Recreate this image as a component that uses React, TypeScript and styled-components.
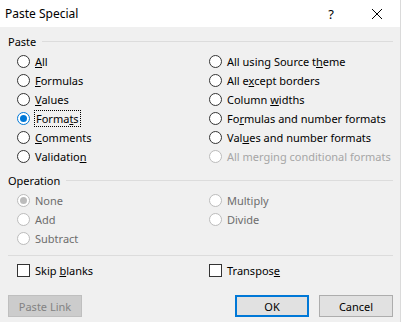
import React from 'react';
import styled, { createGlobalStyle } from 'styled-components';

const GlobalStyle = createGlobalStyle`
  html, body {
    margin: 0;
    padding: 0;
    background: #ffffff;
  }
  body {
    font-family: 'Noto Sans', 'Open Sans', sans-serif;
    font-size: 11px;
    color: #000000;
  }
`;

const Dialog = styled.div`
  width: 400px;
  height: 322px;
  background: #f0f0f0;
  border-right: 1px solid #dadada;
  display: flex;
  flex-direction: column;
`;

const TitleBar = styled.div`
  height: 27px;
  background: #ffffff;
  display: flex;
  align-items: center;
  padding-left: 5px;
`;

const Title = styled.div`
  flex: 1;
  font-size: 12px;
`;

const TitleButton = styled.div`
  width: 46px;
  height: 27px;
  display: flex;
  align-items: center;
  justify-content: center;
  font-size: 13px;
`;

const Body = styled.div`
  padding: 6px 7px 0 8px;
  display: flex;
  flex-direction: column;
`;

const GroupHeader = styled.div<{ $gap?: number }>`
  display: flex;
  align-items: center;
  height: 16px;
  gap: 6px;
  margin-top: ${p => p.$gap ?? 0}px;

  &::after {
    content: '';
    flex: 1;
    height: 1px;
    background: #dcdcdc;
  }
`;

const OptionGrid = styled.div<{ $rows: number }>`
  display: grid;
  grid-template-columns: 192px 1fr;
  grid-template-rows: repeat(${p => p.$rows}, 19px);
  grid-auto-flow: column;
  padding: 3px 0 0 9px;
`;

const Option = styled.label<{ $disabled?: boolean; $dim?: boolean }>`
  display: flex;
  align-items: center;
  gap: 5px;
  color: ${p => (p.$dim ? '#a6a6a6' : p.$disabled ? '#6d6d6d' : '#000')};
  white-space: nowrap;
`;

const Radio = styled.span<{ $checked?: boolean; $disabled?: boolean }>`
  width: 11px;
  height: 11px;
  border-radius: 50%;
  border: 1px solid ${p => (p.$checked && !p.$disabled ? '#0078d7' : p.$disabled ? '#bcbcbc' : '#333')};
  background: #fff;
  position: relative;
  flex: none;

  &::after {
    content: '';
    display: ${p => (p.$checked ? 'block' : 'none')};
    position: absolute;
    left: 2px;
    top: 2px;
    width: 7px;
    height: 7px;
    border-radius: 50%;
    background: ${p => (p.$disabled ? '#bcbcbc' : '#0078d7')};
  }
`;

const Focus = styled.span`
  outline: 1px dotted #000;
  outline-offset: 0;
  padding: 0 1px;
`;

const Separator = styled.div`
  height: 1px;
  background: #dcdcdc;
  margin-top: 7px;
`;

const CheckRow = styled.div`
  display: grid;
  grid-template-columns: 192px 1fr;
  padding: 7px 0 0 9px;
`;

const Check = styled.label`
  display: flex;
  align-items: center;
  gap: 5px;
`;

const Box = styled.span`
  width: 11px;
  height: 11px;
  border: 1px solid #333;
  background: #fff;
  flex: none;
`;

const ButtonRow = styled.div`
  display: flex;
  align-items: center;
  margin-top: 17px;
`;

const Spacer = styled.div`
  flex: 1;
`;

const Button = styled.button<{ $primary?: boolean }>`
  font-family: inherit;
  font-size: 11px;
  width: 74px;
  height: 22px;
  box-sizing: border-box;
  background: ${p => (p.disabled ? '#cccccc' : '#e1e1e1')};
  color: ${p => (p.disabled ? '#838383' : '#000')};
  border: ${p => (p.$primary ? '2px solid #0078d7' : p.disabled ? '1px solid #bfbfbf' : '1px solid #adadad')};
  padding: 0;
  margin-left: ${p => (p.$primary ? '0' : '10px')};

  &:first-child {
    margin-left: 0;
  }
`;

type Opt = { label: React.ReactNode; checked?: boolean; disabled?: boolean; dim?: boolean; focus?: boolean };

const u = (before: string, key: string, after: string) => (
  <>
    {before}
    <span style={{ textDecoration: 'underline' }}>{key}</span>
    {after}
  </>
);

const pasteOptions: Opt[] = [
  { label: u('', 'A', 'll') },
  { label: u('', 'F', 'ormulas') },
  { label: u('', 'V', 'alues') },
  { label: u('Forma', 't', 's'), checked: true, focus: true },
  { label: u('', 'C', 'omments') },
  { label: u('Validatio', 'n', '') },
  { label: u('All using Source t', 'h', 'eme') },
  { label: u('All e', 'x', 'cept borders') },
  { label: u('Column ', 'w', 'idths') },
  { label: u('Fo', 'r', 'mulas and number formats') },
  { label: u('Val', 'u', 'es and number formats') },
  { label: 'All merging conditional formats', dim: true, disabled: true },
];

const operationOptions: Opt[] = [
  { label: 'None', checked: true, disabled: true },
  { label: 'Add', disabled: true },
  { label: 'Subtract', disabled: true },
  { label: 'Multiply', disabled: true },
  { label: 'Divide', disabled: true },
];

const OptionList = ({ items, rows }: { items: Opt[]; rows: number }) => (
  <OptionGrid $rows={rows}>
    {items.map((o, i) => (
      <Option key={i} $disabled={o.disabled} $dim={o.dim}>
        <Radio $checked={o.checked} $disabled={o.disabled} />
        {o.focus ? <Focus>{o.label}</Focus> : <span>{o.label}</span>}
      </Option>
    ))}
  </OptionGrid>
);

export default function App() {
  return (
    <>
      <GlobalStyle />
      <Dialog>
        <TitleBar>
          <Title>Paste Special</Title>
          <TitleButton>?</TitleButton>
          <TitleButton>
            <svg width="12" height="12" viewBox="0 0 12 12">
              <path d="M1 1 L11 11 M11 1 L1 11" stroke="#000" strokeWidth="1" />
            </svg>
          </TitleButton>
        </TitleBar>
        <Body>
          <GroupHeader>Paste</GroupHeader>
          <OptionList items={pasteOptions} rows={6} />
          <GroupHeader $gap={6}>Operation</GroupHeader>
          <OptionList items={operationOptions} rows={3} />
          <Separator />
          <CheckRow>
            <Check>
              <Box />
              <span>{u('Skip ', 'b', 'lanks')}</span>
            </Check>
            <Check>
              <Box />
              <span>{u('Transpos', 'e', '')}</span>
            </Check>
          </CheckRow>
          <ButtonRow>
            <Button disabled>Paste Link</Button>
            <Spacer />
            <Button $primary>OK</Button>
            <Button>Cancel</Button>
          </ButtonRow>
        </Body>
      </Dialog>
    </>
  );
}
